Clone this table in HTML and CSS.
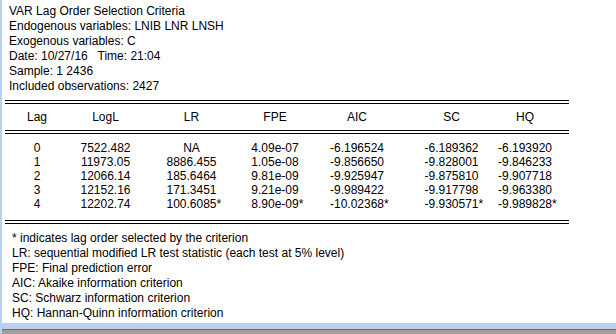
FILE: index.html
```html
<!DOCTYPE html>
<html>
<head>
<meta charset="utf-8">
<link rel="stylesheet" href="styles.css">
</head>
<body>
<div class="window">
  <div class="info">
    <div>VAR Lag Order Selection Criteria</div>
    <div>Endogenous variables: LNIB LNR LNSH </div>
    <div>Exogenous variables: C </div>
    <div class="pre">Date: 10/27/16   Time: 21:04</div>
    <div>Sample: 1 2436</div>
    <div>Included observations: 2427</div>
  </div>
  <div class="table">
    <div class="rule"></div>
    <div class="row head">
      <span>Lag</span><span>LogL</span><span>LR</span><span>FPE</span><span>AIC</span><span>SC</span><span>HQ</span>
    </div>
    <div class="rule"></div>
    <div class="rows">
      <div class="row">
        <span>0</span><span>7522.482</span><span>NA</span><span>4.09e-07</span><span>-6.196524</span><span>-6.189362</span><span>-6.193920</span>
      </div>
      <div class="row">
        <span>1</span><span>11973.05</span><span>8886.455</span><span>1.05e-08</span><span>-9.856650</span><span>-9.828001</span><span>-9.846233</span>
      </div>
      <div class="row">
        <span>2</span><span>12066.14</span><span>185.6464</span><span>9.81e-09</span><span>-9.925947</span><span>-9.875810</span><span>-9.907718</span>
      </div>
      <div class="row">
        <span>3</span><span>12152.16</span><span>171.3451</span><span>9.21e-09</span><span>-9.989422</span><span>-9.917798</span><span>-9.963380</span>
      </div>
      <div class="row">
        <span>4</span><span>12202.74</span><span>100.6085<i class="star">*</i></span><span>8.90e-09<i class="star">*</i></span><span>-10.02368<i class="star">*</i></span><span>-9.930571<i class="star">*</i></span><span>-9.989828<i class="star">*</i></span>
      </div>
    </div>
    <div class="rule"></div>
  </div>
  <div class="notes">
    <div>* indicates lag order selected by the criterion</div>
    <div>LR: sequential modified LR test statistic (each test at 5% level)</div>
    <div>FPE: Final prediction error</div>
    <div>AIC: Akaike information criterion</div>
    <div>SC: Schwarz information criterion</div>
    <div>HQ: Hannan-Quinn information criterion</div>
  </div>
</div>
<div class="status"></div>
</body>
</html>
```

FILE: styles.css
```css
html, body {
  margin: 0;
  padding: 0;
  background: #ffffff;
}
body {
  width: 616px;
  height: 334px;
  display: flex;
  flex-direction: column;
  font-family: "Liberation Sans", Arial, sans-serif;
  font-size: 12px;
  color: #000;
  overflow: hidden;
}
.window {
  height: 323px;
  box-sizing: border-box;
  border-left: 2px solid #b9d1ea;
  background: #fff;
  padding-top: 4px;
}
.info {
  padding-left: 7px;
  line-height: 15px;
}
.pre {
  white-space: pre;
}
.table {
  margin-left: 3px;
  width: 564px;
  margin-top: 6px;
}
.rule {
  height: 2px;
  border-top: 1px solid #000;
  border-bottom: 1px solid #000;
}
.row {
  display: grid;
  grid-template-columns: 64px 73px 99px 68px 96px 93px 54px;
  text-align: center;
  line-height: 14px;
  white-space: nowrap;
}
.row.head {
  line-height: 26px;
}
.rows {
  padding: 7px 0 9px;
}
.star {
  font-style: normal;
  margin-right: -0.389em;
}
.notes {
  margin-top: 7px;
  padding-left: 10px;
  line-height: 15px;
}
.status {
  height: 11px;
  border-left: 2px solid #b9d1ea;
  background: linear-gradient(#b9d1ea 0 6px, #1a86a8 6px 7px, #a0a0a0 7px);
}
```
